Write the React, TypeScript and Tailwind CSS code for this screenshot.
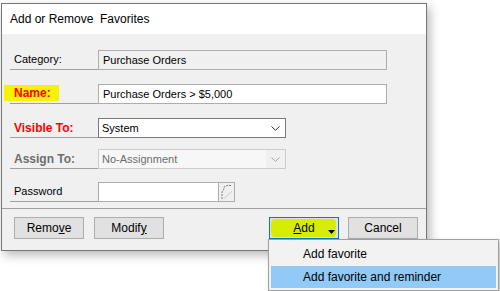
import React from "react";

const Chevron = ({ color }: { color: string }) => (
    <svg width="9" height="5" viewBox="0 0 9 5" fill="none">
        <polyline points="0.5,0.5 4.5,4.3 8.5,0.5" stroke={color} strokeWidth="1" />
    </svg>
);

const Row = ({ label, labelClass, children, className }: { label: React.ReactNode; labelClass?: string; children: React.ReactNode; className?: string }) => (
    <div className={`flex items-end pl-[8px] ${className ?? ""}`}>
        <div className={`w-[88px] h-[20px] border-b border-[#a0a0a0] flex items-center pl-[4px] ${labelClass ?? ""}`}>{label}</div>
        {children}
    </div>
);

const Btn = ({ children }: { children: React.ReactNode }) => (
    <button className="w-[70px] h-[22px] border border-[#adadad] bg-[#e1e1e1] text-[12px] flex items-center justify-center">
        {children}
    </button>
);

export default function App() {
    return (
        <div className="w-[500px] h-[291px] bg-white relative overflow-hidden font-['Liberation_Sans',Arial,sans-serif] text-[11px] text-black">
            <div className="ml-[1px] mt-[3px] w-[426px] border border-[#767676] bg-[#f0f0f0] shadow-[3px_4px_10px_rgba(0,0,0,0.28)] flex flex-col">
                <div className="h-[30px] bg-white flex items-center pl-[8px] text-[12px] whitespace-pre">Add or Remove  Favorites</div>

                <div className="pt-[16px]">
                    <Row label="Category:">
                        <div className="w-[289px] h-[20px] border border-[#adadad] bg-[#f0f0f0] pl-[4px] flex items-center">Purchase Orders</div>
                    </Row>

                    <Row
                        className="mt-[14px]"
                        label={<span className="-ml-[10px] pl-[10px] pr-[8px] h-[16px] -mt-[2px] flex items-center bg-[#f4f400] text-[#ff0000] font-bold text-[12px]">Name:</span>}
                    >
                        <div className="w-[289px] h-[20px] border border-[#adadad] bg-white pl-[4px] flex items-center">Purchase Orders &gt; $5,000</div>
                    </Row>

                    <Row className="mt-[14px]" label="Visible To:" labelClass="text-[#ff0000] font-bold text-[12px]">
                        <div className="w-[188px] h-[20px] border border-[#7a7a7a] bg-white pl-[3px] pr-[5px] flex items-center justify-between">
                            <span>System</span>
                            <Chevron color="#333333" />
                        </div>
                    </Row>

                    <Row className="mt-[11px]" label="Assign To:" labelClass="text-[#6d6d6d] font-bold text-[12px]">
                        <div className="w-[188px] h-[20px] border border-[#cccccc] bg-[#f0f0f0] flex items-stretch">
                            <div className="flex-1 bg-[#f7f7f7] pl-[3px] flex items-center text-[#6d6d6d]">No-Assignment</div>
                            <div className="w-[19px] flex items-center justify-center">
                                <Chevron color="#a8a8a8" />
                            </div>
                        </div>
                    </Row>

                    <Row className="mt-[13px]" label="Password">
                        <div className="w-[137px] h-[20px] border border-[#adadad] bg-white flex items-stretch">
                            <div className="flex-1" />
                            <div className="w-[16px] border-l border-[#adadad] bg-[#f0f0f0] flex items-center justify-center">
                                <svg width="14" height="16" viewBox="0 0 14 16" fill="none">
                                    <path d="M2 15 L2 8 L4 5 L4 3 L7 1.5 L11 1.5" stroke="#7a7a7a" strokeWidth="1" strokeDasharray="2 1" />
                                    <path d="M4 14.5 L12 7" stroke="#d8d8d8" strokeWidth="1.2" />
                                </svg>
                            </div>
                        </div>
                    </Row>
                </div>

                <div className="mt-[6px] border-t border-[#a0a0a0] pt-[8px] pb-[11px] pl-[12px] pr-[8px] flex justify-between">
                    <div className="flex gap-[10px]">
                        <Btn>
                            <span>Remo<span className="underline">v</span>e</span>
                        </Btn>
                        <Btn>
                            <span>Modif<span className="underline">y</span></span>
                        </Btn>
                    </div>
                    <div className="flex gap-[9px]">
                        <button className="relative w-[70px] h-[22px] border border-[#0078d7] bg-[#e1e1e1] text-[12px] flex items-center justify-center p-[1px]">
                            <span className="absolute left-[1px] right-[2px] top-[1px] bottom-[1px] rounded-[4px] bg-[#d6ec00]" />
                            <span className="relative">
                                <span className="underline">A</span>dd
                            </span>
                            <svg className="absolute right-[3px] bottom-[4px]" width="7" height="4" viewBox="0 0 7 4">
                                <polygon points="0,0 7,0 3.5,4" fill="#000" />
                            </svg>
                        </button>
                        <Btn>Cancel</Btn>
                    </div>
                </div>
            </div>

            <div className="absolute left-[268px] top-[239px] w-[231px] border border-[#a0a0a0] bg-[#f2f2f2] shadow-[2px_2px_4px_rgba(0,0,0,0.25)] p-[2px] text-[12px]">
                <div className="h-[24px] pl-[32px] flex items-center">Add favorite</div>
                <div className="h-[22px] pl-[32px] flex items-center bg-[#91c9f7]">Add favorite and reminder</div>
            </div>
        </div>
    );
}
